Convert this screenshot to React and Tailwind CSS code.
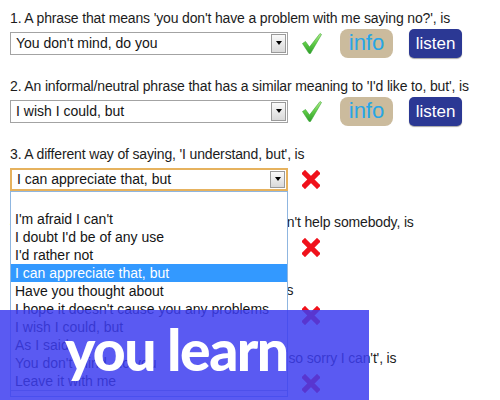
import React from "react";

const Check = () => (
  <svg width="20" height="21" viewBox="0 0 20 21" className="shrink-0">
    <defs>
      <linearGradient id="cg" x1="0" y1="0" x2="0" y2="1">
        <stop offset="0" stopColor="#b6ee8e" />
        <stop offset="0.5" stopColor="#5fcb45" />
        <stop offset="1" stopColor="#2e9e2a" />
      </linearGradient>
    </defs>
    <path d="M0.5 10.5 L3.5 8.5 L7.5 14 L18 0.5 L19.5 1.5 L8.5 20.5 L7 20.5 Z" fill="url(#cg)" stroke="#3aa636" strokeWidth="0.6" strokeLinejoin="round" />
  </svg>
);

const Cross = () => (
  <svg width="18" height="19" viewBox="0 0 18 19" className="shrink-0">
    <path d="M3 3.5 L15 15.5 M15 3.5 L3 15.5" stroke="#f0111b" strokeWidth="5.2" strokeLinecap="square" />
  </svg>
);

const Select = ({ value, active }) => (
  <div
    className={`flex h-[23px] w-[278px] shrink-0 items-stretch bg-white ${
      active ? "border-2 border-[#e6b25e]" : "border border-[#a3a3a3]"
    }`}
  >
    <div className="flex flex-1 items-center pl-[5px] text-[14px] leading-none text-[#141414] [font-family:'Liberation_Sans',Arial,sans-serif]">
      {value}
    </div>
    <div className="m-[1px] flex w-[15px] items-center justify-center border border-[#9a9a9a] bg-gradient-to-b from-[#fafafa] to-[#d9d9d9]">
      <div className="h-0 w-0 border-x-[3.5px] border-t-[4px] border-x-transparent border-t-black" />
    </div>
  </div>
);

const Buttons = () => (
  <>
    <div className="ml-[18px] flex h-[29px] w-[53px] items-center justify-center rounded-[8px] bg-[#cbbb9d] pb-[1px] text-[22px] leading-none text-[#27a6e6] [font-family:'Liberation_Sans',Arial,sans-serif]">
      info
    </div>
    <div className="ml-[16px] flex h-[29px] w-[53px] items-center justify-center rounded-[5px] bg-[#2b3894] text-[17px] leading-none text-white shadow-[0_1px_1px_rgba(0,0,0,0.35)] [font-family:'Liberation_Sans',Arial,sans-serif]">
      listen
    </div>
  </>
);

const options = [
  "",
  "I'm afraid I can't",
  "I doubt I'd be of any use",
  "I'd rather not",
  "I can appreciate that, but",
  "Have you thought about",
  "I hope it doesn't cause you any problems",
  "I wish I could, but",
  "As I said",
  "You don't mind, do you",
  "Leave it with me",
];

const Dropdown = () => (
  <div className="absolute left-0 top-full z-10 w-[278px] border border-[#8fb6e0] bg-white">
    {options.map((o, i) => (
      <div
        key={i}
        className={`h-[18px] pl-[4px] text-[14px] leading-[18px] [font-family:'Liberation_Sans',Arial,sans-serif] ${
          i === 4 ? "bg-[#3399ff] text-white" : "text-[#141414]"
        }`}
      >
        {o}
      </div>
    ))}
    <div className="h-[6px] border-t border-[#a9b9cc] bg-white" />
  </div>
);

const questions = [
  { q: "1. A phrase that means 'you don't have a problem with me saying no?', is", v: "You don't mind, do you", ok: true },
  { q: "2. An informal/neutral phrase that has a similar meaning to 'I'd like to, but', is", v: "I wish I could, but", ok: true },
  { q: "3. A different way of saying, 'I understand, but', is", v: "I can appreciate that, but", ok: false, open: true },
  { q: "4. A phrase which you might use when you can't help somebody, is", v: "", ok: false },
  { q: "5. A phrase to use when you have a request, is", v: "", ok: false },
  { q: "6. Another more polite way of saying 'I'm ever so sorry I can't', is", v: "", ok: false },
];

export default function App() {
  return (
    <div className="relative h-[400px] w-[500px] overflow-hidden bg-white">
      <div className="flex flex-col pl-[10px] pt-[9px]">
        {questions.map((it, i) => (
          <div key={i} className="mb-[19px] flex flex-col">
            <div className="h-[18px] whitespace-nowrap text-[14px] leading-[18px] tracking-[-0.15px] text-[#1c1c1c] [font-family:'Liberation_Sans',Arial,sans-serif]">
              {it.q}
            </div>
            <div className="mt-[1px] flex h-[30px] items-center">
              <div className="relative">
                <Select value={it.v} active={it.open} />
                {it.open && <Dropdown />}
              </div>
              <div className="ml-[14px] flex items-center">
                {it.ok ? <Check /> : <Cross />}
              </div>
              {it.ok && <Buttons />}
            </div>
          </div>
        ))}
      </div>
      <div className="absolute left-0 top-[310px] z-20 h-[90px] w-[369px] bg-[#3d3df0]/85 pl-[65px] pt-[11px]">
        <div className="whitespace-nowrap text-[57px] font-black leading-[57px] tracking-[-1.5px] text-white [font-family:Lato,sans-serif]">
          you learn
        </div>
      </div>
    </div>
  );
}
